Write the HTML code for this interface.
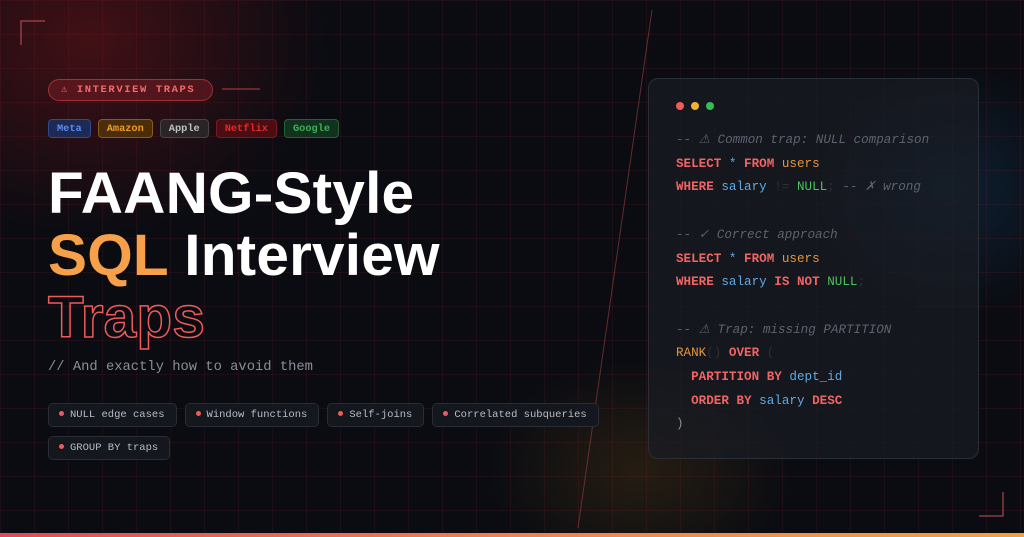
<!DOCTYPE html>
<html><head><meta charset="utf-8"><style>
*{margin:0;padding:0;box-sizing:border-box}
body{width:1024px;height:537px;overflow:hidden;background:#0a0c12;position:relative;font-family:"Liberation Sans",sans-serif}
.bg{position:absolute;inset:0;background:
radial-gradient(ellipse 340px 280px at 90px 40px,rgba(120,20,25,.5),transparent 70%),
radial-gradient(ellipse 200px 180px at 950px 190px,rgba(20,70,110,.35),transparent 70%),
radial-gradient(ellipse 220px 160px at 640px 470px,rgba(120,80,20,.25),transparent 70%)}
.grid{position:absolute;inset:0;background-image:linear-gradient(rgba(160,40,50,.12) 1px,transparent 1px),linear-gradient(90deg,rgba(160,40,50,.12) 1px,transparent 1px);background-size:34px 34px}
.mono{font-family:"Liberation Mono","DejaVu Sans Mono",monospace}
.badge{position:absolute;left:48px;top:79px;width:165px;height:22px;border:1px solid rgba(230,80,80,.5);background:rgba(120,30,35,.5);border-radius:11px;color:#f06b6b;font-size:10.5px;letter-spacing:1.6px;font-weight:bold;line-height:20px;padding-left:12px}
.tags{position:absolute;left:48px;top:119px;display:flex;gap:7px}
.tags span{font-size:10.3px;font-weight:bold;padding:0 8px;height:19px;line-height:18px;border-radius:4px;border:1px solid}
h1{position:absolute;left:48px;top:163px;font-size:58.5px;line-height:62px;font-weight:bold;color:#fff;letter-spacing:0.2px}
.sub{position:absolute;left:48px;top:360px;color:#8a8e98;font-size:13.8px}
.pills{position:absolute;left:48px;top:403px;width:570px;display:flex;flex-wrap:wrap;gap:9px 8px}
.pills span{font-size:10.5px;color:#b8bcc6;height:24px;line-height:22px;padding:0 11px 0 10px;border:1px solid #2a2d36;background:#15171e;border-radius:5px}
.pills span:before{content:"";display:inline-block;width:5px;height:5px;border-radius:50%;background:#f05a5a;margin-right:6px;vertical-align:1px}
.card{position:absolute;left:648px;top:78px;width:331px;height:381px;border:1px solid #2a2e37;border-radius:10px;background:rgba(26,29,36,.7)}
.dots{position:absolute;left:27px;top:23px;display:flex;gap:7px}
.dots i{width:8px;height:8px;border-radius:50%}
.code{position:absolute;left:27px;top:50px;font-size:12.6px;line-height:23.7px;white-space:pre;color:#c8ccd4}
.k{color:#f06464;font-weight:bold}.c{color:#5d626e;font-style:italic}.o{color:#e6953d}.b{color:#63a8e0}.g{color:#4cc25e}.p{color:#2d3038}
</style></head><body>
<div class="bg"></div><div class="grid"></div>
<svg style="position:absolute;left:0;top:0" width="1024" height="537">
<path d="M21 45V21H45" stroke="#c05050" stroke-width="1.5" fill="none" opacity=".7"/>
<path d="M1003 492V516H979" stroke="#c05050" stroke-width="1.5" fill="none" opacity=".7"/>
<line x1="652" y1="10" x2="578" y2="528" stroke="#a04040" stroke-width="1" opacity=".6"/>
<line x1="222" y1="89" x2="260" y2="89" stroke="#803030" stroke-width="1.5"/>
</svg>
<div style="position:absolute;left:0;right:0;bottom:0;height:4px;background:linear-gradient(90deg,#e04a55,#f08050,#f0a040)"></div>
<div class="badge mono">⚠ INTERVIEW TRAPS</div>
<div class="tags mono">
<span style="color:#5a8cf0;background:#1c2a55;border-color:#34488a">Meta</span>
<span style="color:#f09a2a;background:#4a2e0a;border-color:#8a5a18">Amazon</span>
<span style="color:#c0c0c0;background:#2a2426;border-color:#4a4446">Apple</span>
<span style="color:#e02a2a;background:#4a0e12;border-color:#7a1a20">Netflix</span>
<span style="color:#3ab05a;background:#12321e;border-color:#24603a">Google</span>
</div>
<h1>FAANG-Style<br><span style="color:#f7a04a">SQL</span> Interview<br><span style="color:transparent;-webkit-text-stroke:1.5px #f05a5a">Traps</span></h1>
<div class="sub mono">// And exactly how to avoid them</div>
<div class="pills mono"><span>NULL edge cases</span><span>Window functions</span><span>Self-joins</span><span>Correlated subqueries</span><span>GROUP BY traps</span></div>
<div class="card">
<div class="dots"><i style="background:#f05a5a"></i><i style="background:#f0b030"></i><i style="background:#30c050"></i></div>
<div class="code mono"><span class="c">-- ⚠ Common trap: NULL comparison</span>
<span class="k">SELECT</span> <span class="b">*</span> <span class="k">FROM</span> <span class="o">users</span>
<span class="k">WHERE</span> <span class="b">salary</span> <span class="p">!=</span> <span class="g">NULL</span><span class="p">;</span> <span class="c">-- ✗ wrong</span>

<span class="c">-- ✓ Correct approach</span>
<span class="k">SELECT</span> <span class="b">*</span> <span class="k">FROM</span> <span class="o">users</span>
<span class="k">WHERE</span> <span class="b">salary</span> <span class="k">IS NOT</span> <span class="g">NULL</span><span class="p">;</span>

<span class="c">-- ⚠ Trap: missing PARTITION</span>
<span class="o">RANK</span><span class="p">()</span> <span class="k">OVER</span> <span class="p">(</span>
  <span class="k">PARTITION BY</span> <span class="b">dept_id</span>
  <span class="k">ORDER BY</span> <span class="b">salary</span> <span class="k">DESC</span>
<span style="color:#8a8e98">)</span></div>
</div>
</body></html>
